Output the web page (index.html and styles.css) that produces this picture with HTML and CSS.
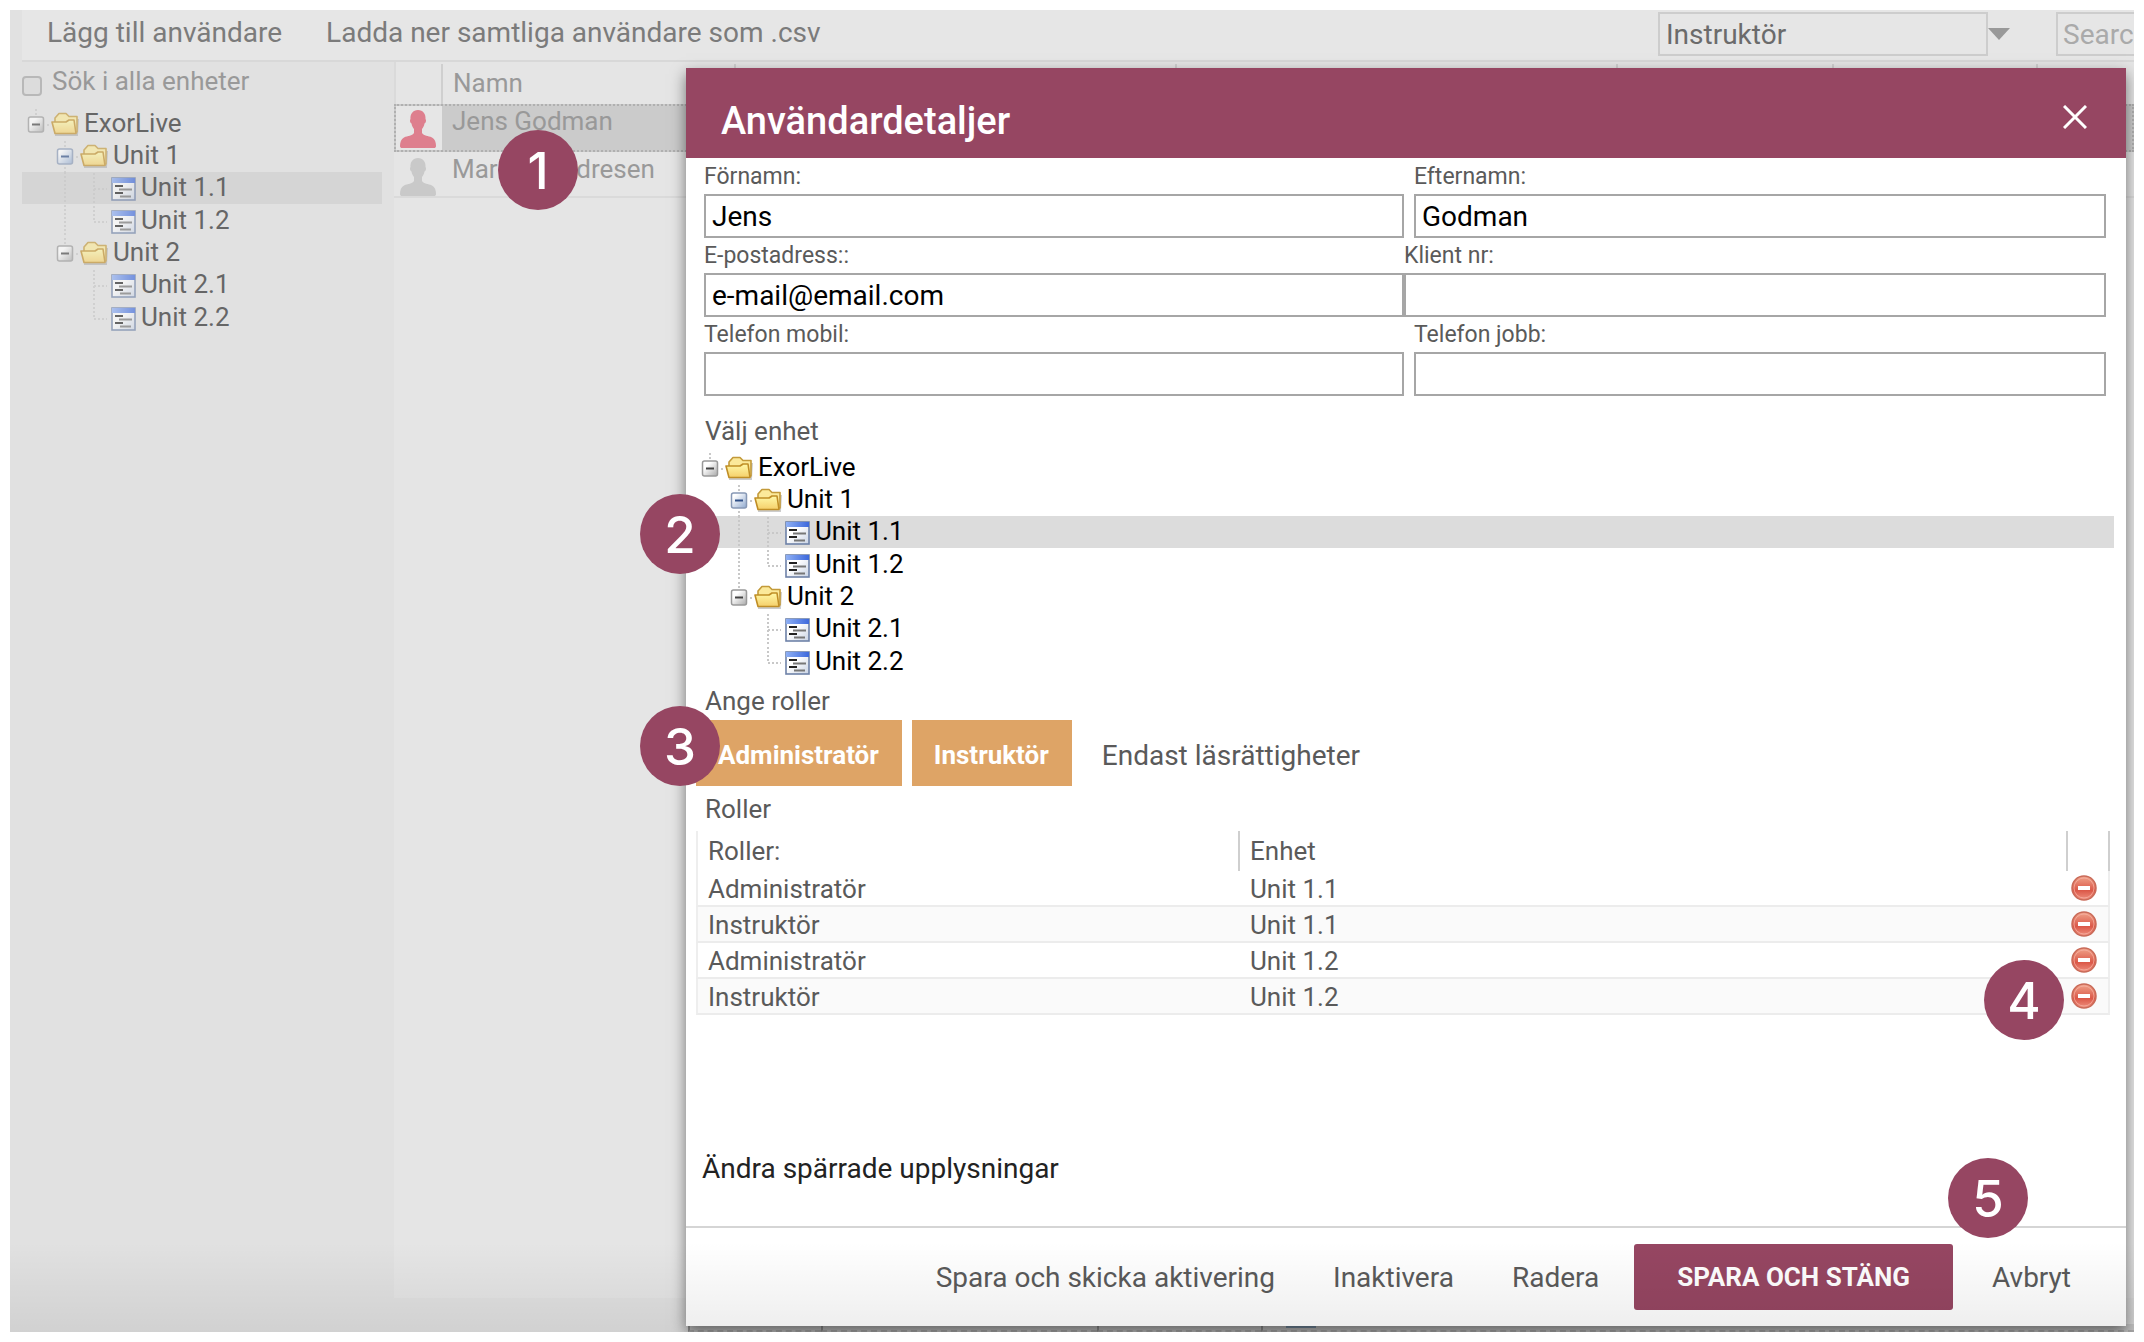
FILE: index.html
```html
<!DOCTYPE html>
<html lang="sv">
  <head>
    <meta charset="UTF-8" />
    <meta name="viewport" content="width=device-width, initial-scale=1.0" />
    <title>Användardetaljer</title>
    <link rel="stylesheet" href="styles.css">
  </head>
  <body>
    <!-- shared icons -->
    <svg class="sprite" aria-hidden="true">
      <defs>
        <linearGradient id="gFolder" x1="0" y1="0" x2="0" y2="1">
          <stop offset="0" stop-color="#fff9a8" />
          <stop offset="1" stop-color="#f5cf6a" />
        </linearGradient>
        <linearGradient id="gToggle" x1="0" y1="0" x2="1" y2="1">
          <stop offset="0.3" stop-color="#ffffff" />
          <stop offset="1" stop-color="#a9a9a9" />
        </linearGradient>
        <linearGradient id="gToggleBlue" x1="0" y1="0" x2="1" y2="1">
          <stop offset="0.2" stop-color="#ffffff" />
          <stop offset="1" stop-color="#8fa9cf" />
        </linearGradient>
        <linearGradient id="gBar" x1="0" y1="0" x2="1" y2="0">
          <stop offset="0" stop-color="#8fb0f4" />
          <stop offset="1" stop-color="#3c68dc" />
        </linearGradient>
        <linearGradient id="gPage" x1="0" y1="0" x2="1" y2="1">
          <stop offset="0.4" stop-color="#ffffff" />
          <stop offset="1" stop-color="#c9d3e4" />
        </linearGradient>
        <linearGradient id="gRed" x1="0" y1="0" x2="0" y2="1">
          <stop offset="0" stop-color="#f0a58c" />
          <stop offset="0.6" stop-color="#db5848" />
          <stop offset="1" stop-color="#ef9180" />
        </linearGradient>
      </defs>
      <symbol id="line" viewBox="0 0 29 32">
        <path class="dots" d="M14 0V32" />
      </symbol>
      <symbol id="tee" viewBox="0 0 29 32">
        <path class="dots" d="M14 1V32M14 17H27" />
      </symbol>
      <symbol id="elbow" viewBox="0 0 29 32">
        <path class="dots" d="M14 1V17H27" />
      </symbol>
      <symbol id="minus" viewBox="0 0 29 32">
        <path class="dots" d="M14 1V8M25 17H29" />
        <rect x="6.500" y="9" width="15" height="15" rx="2" fill="url(#gToggle)" stroke="#999" stroke-width="1.500" />
        <path d="M10 16.500H18" stroke="#444" stroke-width="2" />
      </symbol>
      <symbol id="minus-blue" viewBox="0 0 29 32">
        <path class="dots" d="M14 1V8M25 17H29M14 27V32" />
        <rect x="6.500" y="9" width="15" height="15" rx="2" fill="url(#gToggleBlue)" stroke="#8798b5" stroke-width="1.500" />
        <path d="M10 16.500H18" stroke="#2f4f86" stroke-width="2" />
      </symbol>
      <symbol id="folder" viewBox="0 0 28 24">
        <path d="M4 23H26L27 7" fill="none" stroke="#000" stroke-opacity="0.2" stroke-width="2" />
        <path d="M4 20V6L8 1.500H15L18 4.500H26V20Z" fill="#fbe99a" stroke="#c39a3a" stroke-width="1.600" stroke-linejoin="round" />
        <path d="M1 10H15L18 8H23L25 21.500H4Z" fill="url(#gFolder)" stroke="#c08e26" stroke-width="1.600" stroke-linejoin="round" />
      </symbol>
      <symbol id="form" viewBox="0 0 25 24">
        <rect x="1" y="1" width="23" height="22" fill="url(#gPage)" stroke="#6e82a8" stroke-width="1.600" />
        <rect x="1" y="1" width="23" height="5" fill="url(#gBar)" />
        <path d="M4 9H12M4 16H12" stroke="#222" stroke-width="2" />
        <path d="M8 12.500H21M9 19.500H20" stroke="#777" stroke-width="1.800" />
      </symbol>
      <symbol id="person" viewBox="0 0 36 38">
        <path d="M18 0c5 0 8 4 7.500 9 1 1 .5 4-1 4.500-.5 3-1.500 4-2.500 5.500v4c2 3 6 2.500 10 4.500 3 1.500 4 5 4 8.500 0 1.500-1 2-2 2H2c-1 0-2-.5-2-2 0-3.500 1-7 4-8.500 4-2 8-1.500 10-4.500v-4c-1-1.500-2-2.500-2.500-5.500-1.500-.5-2-3.500-1-4.500C10 4 13 0 18 0Z" />
      </symbol>
      <symbol id="remove" viewBox="0 0 26 26">
        <circle cx="13" cy="13" r="12" fill="url(#gRed)" stroke="#c96a58" stroke-width="1.500" />
        <circle cx="13" cy="13" r="10" fill="none" stroke="#f6b5a6" stroke-opacity="0.700" />
        <rect x="7" y="11" width="12" height="4" fill="#fff" />
      </symbol>
    </svg>

    <div class="app">
      <header class="toolbar">
        <button class="tool">Lägg till användare</button>
        <button class="tool">Ladda ner samtliga användare som .csv</button>
        <label class="role-filter">
          <select aria-label="Roll">
            <option>Instruktör</option>
          </select>
          <svg width="22" height="12" viewBox="0 0 22 12"><path d="M0 0H22L11 12Z" fill="#999" /></svg>
        </label>
        <div class="search">
          <input type="text" placeholder="Search" aria-label="Search" />
        </div>
      </header>

      <div class="columns">
        <aside class="sidebar">
          <label class="search-all"><input type="checkbox" />Sök i alla enheter</label>
          <ul class="tree">
            <li><svg class="cell"><use href="#minus" /></svg><svg class="icon"><use href="#folder" /></svg><span>ExorLive</span></li>
            <li class="level2"><svg class="cell"><use href="#minus-blue" /></svg><svg class="icon"><use href="#folder" /></svg><span>Unit 1</span></li>
            <li class="level2 selected"><svg class="cell"><use href="#line" /></svg><svg class="cell"><use href="#tee" /></svg><svg class="icon leaf"><use href="#form" /></svg><span>Unit 1.1</span></li>
            <li class="level2 last"><svg class="cell"><use href="#line" /></svg><svg class="cell"><use href="#elbow" /></svg><svg class="icon leaf"><use href="#form" /></svg><span>Unit 1.2</span></li>
            <li class="level2"><svg class="cell"><use href="#minus" /></svg><svg class="icon"><use href="#folder" /></svg><span>Unit 2</span></li>
            <li class="level3"><svg class="cell"><use href="#tee" /></svg><svg class="icon leaf"><use href="#form" /></svg><span>Unit 2.1</span></li>
            <li class="level3 last"><svg class="cell"><use href="#elbow" /></svg><svg class="icon leaf"><use href="#form" /></svg><span>Unit 2.2</span></li>
          </ul>
        </aside>

        <main class="users">
          <div class="users-head">
            <span class="col-icon"></span>
            <span class="col-name">Namn</span>
            <span class="col-wide"></span>
            <span class="col-wide"></span>
            <span class="col-mid"></span>
            <span class="col-small"></span>
          </div>
          <div class="user active">
            <span class="avatar"><svg class="person"><use href="#person" /></svg></span>
            <span class="user-name">Jens Godman</span>
          </div>
          <div class="user">
            <span class="avatar"><svg class="person"><use href="#person" /></svg></span>
            <span class="user-name">Markus Andresen</span>
          </div>
        </main>
      </div>

      <div class="status">
        <span class="status-a"></span>
        <span class="status-b"></span>
        <span class="status-c"></span>
        <span class="status-d"><i></i></span>
      </div>

      <section class="modal" role="dialog" aria-labelledby="modalTitle">
        <header class="modal-head">
          <h1 id="modalTitle">Användardetaljer</h1>
          <button class="close" aria-label="Stäng">
            <svg width="24" height="24" viewBox="0 0 24 24"><path d="M1 1L23 23M23 1L1 23" stroke="#fff" stroke-width="3" /></svg>
          </button>
        </header>

        <div class="modal-body">
          <form class="fields">
            <div class="row">
              <div class="field"><label for="fornamn">Förnamn:</label><input id="fornamn" type="text" value="Jens" /></div>
              <div class="field"><label for="efternamn">Efternamn:</label><input id="efternamn" type="text" value="Godman" /></div>
            </div>
            <div class="row joined">
              <div class="field"><label for="epost">E-postadress::</label><input id="epost" type="text" value="e-mail@email.com" /></div>
              <div class="field"><label for="klient">Klient nr:</label><input id="klient" type="text" /></div>
            </div>
            <div class="row">
              <div class="field"><label for="mobil">Telefon mobil:</label><input id="mobil" type="text" /></div>
              <div class="field"><label for="jobb">Telefon jobb:</label><input id="jobb" type="text" /></div>
            </div>
          </form>

          <h2 class="unit-title">Välj enhet</h2>
          <ul class="tree">
            <li><svg class="cell"><use href="#minus" /></svg><svg class="icon"><use href="#folder" /></svg><span>ExorLive</span></li>
            <li class="level2"><svg class="cell"><use href="#minus-blue" /></svg><svg class="icon"><use href="#folder" /></svg><span>Unit 1</span></li>
            <li class="level2 selected"><svg class="cell"><use href="#line" /></svg><svg class="cell"><use href="#tee" /></svg><svg class="icon leaf"><use href="#form" /></svg><span>Unit 1.1</span></li>
            <li class="level2 last"><svg class="cell"><use href="#line" /></svg><svg class="cell"><use href="#elbow" /></svg><svg class="icon leaf"><use href="#form" /></svg><span>Unit 1.2</span></li>
            <li class="level2"><svg class="cell"><use href="#minus" /></svg><svg class="icon"><use href="#folder" /></svg><span>Unit 2</span></li>
            <li class="level3"><svg class="cell"><use href="#tee" /></svg><svg class="icon leaf"><use href="#form" /></svg><span>Unit 2.1</span></li>
            <li class="level3 last"><svg class="cell"><use href="#elbow" /></svg><svg class="icon leaf"><use href="#form" /></svg><span>Unit 2.2</span></li>
          </ul>

          <h2>Ange roller</h2>
          <div class="roles">
            <button class="role">Administratör</button>
            <button class="role">Instruktör</button>
            <button class="readonly">Endast läsrättigheter</button>
          </div>

          <h2>Roller</h2>
          <table class="role-table">
            <thead>
              <tr><th>Roller:</th><th>Enhet</th><th class="action"></th></tr>
            </thead>
            <tbody>
              <tr><td>Administratör</td><td>Unit 1.1</td><td class="action"><button aria-label="Ta bort"><svg><use href="#remove" /></svg></button></td></tr>
              <tr><td>Instruktör</td><td>Unit 1.1</td><td class="action"><button aria-label="Ta bort"><svg><use href="#remove" /></svg></button></td></tr>
              <tr><td>Administratör</td><td>Unit 1.2</td><td class="action"><button aria-label="Ta bort"><svg><use href="#remove" /></svg></button></td></tr>
              <tr><td>Instruktör</td><td>Unit 1.2</td><td class="action"><button aria-label="Ta bort"><svg><use href="#remove" /></svg></button></td></tr>
            </tbody>
          </table>

          <a class="locked" href="#">Ändra spärrade upplysningar</a>
        </div>

        <footer class="modal-foot">
          <button>Spara och skicka aktivering</button>
          <button>Inaktivera</button>
          <button>Radera</button>
          <button class="save">SPARA OCH STÄNG</button>
          <button class="cancel">Avbryt</button>
        </footer>
      </section>

      <div class="fade"></div>

      <span class="pin pin1">1</span>
      <span class="pin pin2">2</span>
      <span class="pin pin3">3</span>
      <span class="pin pin4">4</span>
      <span class="pin pin5">5</span>
    </div>
  </body>
</html>
```

FILE: styles.css
```css
* {
  box-sizing: border-box;
}
body {
  margin: 0;
  padding: 10px;
  background: white;
  font-family: Roboto, "Liberation Sans", sans-serif;
  font-size: 26px;
  color: #5a5a5a;
}
button,
input,
select {
  font: inherit;
  color: inherit;
  background: none;
  border: none;
  border-radius: 0;
  margin: 0;
  padding: 0;
}
button {
  cursor: pointer;
  white-space: nowrap;
}
.sprite {
  position: absolute;
  width: 0;
  height: 0;
}
.dots {
  fill: none;
  stroke: #c8c8c8;
  stroke-width: 2;
  stroke-dasharray: 2 2;
}
.app {
  position: relative;
  display: flex;
  flex-direction: column;
  min-height: calc(100vh - 20px);
  background: #e1e1e1;
  overflow: hidden;
}

/* top bar */
.toolbar {
  display: flex;
  align-items: flex-start;
  height: 52px;
  margin-left: 12px;
  padding-left: 25px;
  background: #e6e6e6;
  border-bottom: 2px solid #d8d8d8;
}
.tool {
  line-height: 32px;
  padding: 7px 0;
  margin-right: 44px;
  font-size: 28px;
  color: #7b7b7b;
}
.role-filter {
  display: flex;
  align-items: center;
  margin-left: auto;
  padding-top: 2px;
}
.role-filter select {
  appearance: none;
  width: 330px;
  height: 44px;
  padding-left: 6px;
  border: 2px solid #cdcdcd;
  font-size: 28px;
  color: #6b6b6b;
}
.search {
  width: 78px;
  margin-left: 46px;
  padding-top: 2px;
  overflow: hidden;
}
.search input {
  width: 240px;
  height: 44px;
  padding-left: 5px;
  border: 2px solid #cdcdcd;
  font-size: 28px;
}
.search input::placeholder {
  color: #aaa;
}

.columns {
  flex: 1;
  display: grid;
  grid-template-columns: 384px 1fr;
}
.sidebar {
  padding: 0 12px;
}
.search-all {
  display: flex;
  align-items: center;
  gap: 10px;
  height: 38px;
  margin-bottom: 8px;
  line-height: 32px;
  color: #999;
}
.search-all input {
  appearance: none;
  width: 20px;
  height: 20px;
  margin-top: 9px;
  border: 2px solid #b8b8b8;
  border-radius: 4px;
  background: #dcdcdc;
}

/* unit tree */
.tree {
  list-style: none;
  margin: 0;
  padding: 0;
  color: black;
}
.tree li {
  display: flex;
  height: 32px;
}
.tree .level2 {
  padding-left: 29px;
}
.tree .level3 {
  padding-left: 58px;
}
.tree .last {
  margin-top: 1px;
}
.tree .selected {
  background: #dcdcdc;
}
.tree span {
  line-height: 31px;
}
.cell {
  width: 29px;
  height: 32px;
}
.icon {
  width: 28px;
  height: 24px;
  margin: 4px 5px 0 0;
}
.icon.leaf {
  width: 25px;
  margin: 5px 5px 0 2px;
}
.sidebar .tree {
  color: #666;
}
.sidebar .tree .selected {
  background: #d5d5d5;
}
.sidebar .cell,
.sidebar .icon {
  opacity: 0.65;
}

/* user list */
.users {
  background: #e5e5e5;
  color: #999;
}
.users-head {
  display: flex;
  height: 42px;
  padding: 2px 0 0 2px;
  line-height: 38px;
  border-left: 2px solid #dadada;
}
.users-head span {
  border-right: 2px solid #cfcfcf;
}
.users-head .col-icon {
  width: 45px;
}
.users-head .col-name {
  width: 293px;
  padding-left: 10px;
}
.users-head .col-wide {
  width: 441px;
}
.users-head .col-mid {
  width: 216px;
}
.users-head .col-small {
  width: 204px;
}
.user {
  display: flex;
  height: 46px;
  border-bottom: 2px solid #dadada;
}
.user.active {
  height: 48px;
  background: #cbcbcb;
  border: 2px dotted #b0b0b0;
}
.avatar {
  width: 48px;
  padding: 6px 6px 0;
}
.active .avatar {
  width: 46px;
  padding: 4px 4px 0;
  background: #e6e6e6;
}
.person {
  width: 36px;
  height: 38px;
  fill: #c9c9c9;
}
.active .person {
  fill: #de7f8e;
}
.user-name {
  padding-left: 10px;
  line-height: 34px;
}
.active .user-name {
  line-height: 30px;
}

/* strip that sticks out below the dialog */
.status {
  display: flex;
  align-items: flex-end;
  height: 34px;
  padding-left: 678px;
}
.status span {
  height: 8px;
  background: #cecece;
  border-left: 2px solid #999;
  border-bottom: 2px dashed #b5b5b5;
}
.status-a {
  width: 133px;
}
.status-b {
  width: 276px;
}
.status-c {
  width: 164px;
}
.status-d {
  flex: 1;
}
.status-d i {
  display: block;
  width: 30px;
  height: 4px;
  margin-left: 23px;
  background: #7f97ad;
}

/* dialog */
.modal {
  position: absolute;
  top: 58px;
  right: 8px;
  bottom: 6px;
  left: 676px;
  display: flex;
  flex-direction: column;
  background: white;
  box-shadow: 0 6px 14px rgba(0, 0, 0, 0.5);
}
.modal-head {
  display: flex;
  align-items: center;
  justify-content: space-between;
  height: 90px;
  padding: 16px 39px 0 35px;
  background: #964662;
  color: white;
}
.modal-head h1 {
  margin: 0;
  font-size: 38px;
  font-weight: 500;
  line-height: 48px;
}
.close {
  display: flex;
  padding-bottom: 8px;
}
.modal-body {
  flex: 1;
  display: flex;
  flex-direction: column;
  padding: 1px 12px 0 10px;
}
.fields {
  padding: 0 8px;
}
.row {
  display: grid;
  grid-template-columns: calc(50% - 1px) 1fr;
  column-gap: 10px;
}
.row.joined {
  column-gap: 0;
}
.field label {
  display: block;
  height: 35px;
  font-size: 23px;
  line-height: 35px;
}
.field input {
  display: block;
  width: 100%;
  height: 44px;
  padding: 0 6px;
  border: 2px solid #a6a6a6;
  font-size: 28px;
  color: black;
}
.modal-body h2 {
  margin: 7px 0 3px;
  padding-left: 9px;
  font-size: 26px;
  font-weight: 400;
  line-height: 32px;
}
.modal-body .unit-title {
  margin: 19px 0 5px;
}
.roles {
  display: flex;
  gap: 10px;
}
.role {
  height: 66px;
  padding: 4px 23px 0 22px;
  background: #dea466;
  color: white;
  font-weight: 700;
}
.readonly {
  padding: 4px 20px 0;
  font-size: 28px;
}

.role-table {
  width: calc(100% - 4px);
  margin-top: 3px;
  border-spacing: 0;
  table-layout: fixed;
  line-height: 32px;
}
.role-table th {
  height: 40px;
  padding: 0 10px;
  text-align: left;
  font-weight: 400;
  border-right: 2px solid #cfcfcf;
}
.role-table th:first-child {
  width: 544px;
  border-left: 2px solid #eee;
}
.role-table td {
  height: 36px;
  padding: 2px 10px 0;
  border-bottom: 2px solid #ececec;
}
.role-table td:first-child {
  border-left: 2px solid #eee;
}
.role-table .action {
  width: 42px;
  padding: 0 8px 0 0;
  text-align: center;
}
.role-table td.action {
  border-right: 2px solid #eee;
}
.role-table tbody tr:nth-child(even) {
  background: #fafafa;
}
.action button {
  display: block;
  margin: 0 auto;
}
.action svg {
  display: block;
  width: 26px;
  height: 26px;
}
.locked {
  align-self: flex-start;
  margin: auto 0 41px 6px;
  font-size: 28px;
  line-height: 32px;
  color: #222;
  text-decoration: none;
}
.modal-foot {
  display: flex;
  align-items: center;
  justify-content: flex-end;
  height: 100px;
  padding-right: 16px;
  border-top: 2px solid #d5d5d5;
}
.modal-foot button {
  padding: 0 29px;
  font-size: 28px;
}
.modal-foot .save {
  height: 66px;
  margin-left: 6px;
  padding: 0 43px;
  border-radius: 3px;
  background: #964662;
  color: white;
  font-size: 26px;
  font-weight: 700;
}
.modal-foot .cancel {
  padding: 0 39px;
}

/* shade along the bottom edge */
.fade {
  position: absolute;
  right: 0;
  bottom: 0;
  left: 0;
  height: 90px;
  background: linear-gradient(transparent, rgba(0, 0, 0, 0.07));
  pointer-events: none;
}

/* numbered pins */
.pin {
  position: absolute;
  width: 80px;
  height: 80px;
  border-radius: 50%;
  background: #964662;
  color: white;
  font-family: Inter, "Liberation Sans", sans-serif;
  font-size: 51px;
  font-weight: 500;
  line-height: 82px;
  text-align: center;
}
.pin1 {
  top: 120px;
  left: 488px;
}
.pin2 {
  top: 484px;
  left: 630px;
}
.pin3 {
  top: 696px;
  left: 630px;
}
.pin4 {
  top: 950px;
  right: 70px;
}
.pin5 {
  right: 106px;
  bottom: 94px;
}
```
